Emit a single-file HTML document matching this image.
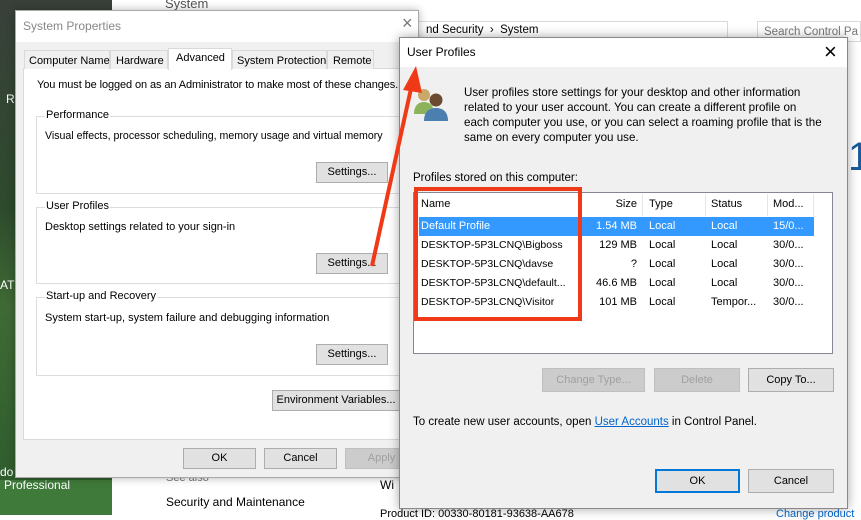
<!DOCTYPE html>
<html><head><meta charset="utf-8"><style>
*{box-sizing:border-box;margin:0;padding:0}
body{width:861px;height:515px;overflow:hidden;position:relative;background:#fff;font-family:"Liberation Sans",sans-serif;font-size:11px;color:#000}
.a{position:absolute;white-space:nowrap}
.btn{position:absolute;background:#e1e1e1;border:1px solid #adadad;text-align:center;line-height:19px;font-size:11px;white-space:nowrap}
.dis{color:#a0a0a0;background:#cccccc;border-color:#bfbfbf}
.grp{position:absolute;border:1px solid #dcdcdc}
.grp .l{position:absolute;top:-8px;left:8px;background:#fff;padding:0 1px;white-space:nowrap}
.row{position:absolute;left:419px;width:395px;height:19px;line-height:19px;font-size:11px}
.row span{position:absolute;white-space:nowrap}
</style></head><body>
<div class="a" style="left:0;top:0;width:112px;height:515px;background:linear-gradient(#39403a,#2d4a2c 40%,#3f6a35 60%,#2c5a2c 100%)"></div>
<div class="a" style="left:0;top:480px;width:112px;height:35px;background:#3f7a3a"></div>
<div class="a" style="left:4px;top:478px;color:#fff;font-size:12px">Professional</div>
<div class="a" style="left:0;top:465px;color:#fff;font-size:12px">do</div>
<div class="a" style="left:0;top:278px;color:#fff;font-size:12px">AT</div>
<div class="a" style="left:6px;top:92px;color:#fff;font-size:12px">R</div>
<div class="a" style="left:136px;top:0;width:725px;height:515px;background:#fff"></div>
<div class="a" style="left:165px;top:-4px;font-size:13px;color:#555">System</div>
<div class="a" style="left:418px;top:21px;width:310px;height:21px;border:1px solid #d9d9d9"></div>
<div class="a" style="left:426px;top:24px;font-size:11.5px">nd Security &nbsp;›&nbsp; System</div>
<div class="a" style="left:757px;top:21px;width:104px;height:21px;border:1px solid #d9d9d9;color:#777;padding:4px 6px;font-size:11.5px;overflow:hidden">Search Control Pa</div>
<div class="a" style="left:848px;top:135px;font-size:40px;color:#1a5a9a">1</div>
<div class="a" style="left:166px;top:472px;color:#777">See also</div>
<div class="a" style="left:166px;top:495px;font-size:12px">Security and Maintenance</div>
<div class="a" style="left:380px;top:478px;font-size:12px">Wi</div>
<div class="a" style="left:380px;top:508px;font-size:11px">Product ID: 00330-80181-93638-AA678</div>
<div class="a" style="left:776px;top:508px;font-size:11px;color:#06c">Change product</div>
<div class="a" style="left:15px;top:10px;width:404px;height:468px;background:#f0f0f0;border:1px solid #aaa;box-shadow:0 0 8px rgba(0,0,0,.3)"></div>
<div class="a" style="left:16px;top:11px;width:402px;height:31px;background:#fff"></div>
<div class="a" style="left:23px;top:19px;font-size:12px;color:#888">System Properties</div>
<div class="a" style="left:402px;top:13px;font-size:18px;color:#777">×</div>
<div class="a" style="left:23px;top:68px;width:390px;height:372px;background:#fff;border:1px solid #d9d9d9"></div>
<div class="a" style="left:24px;top:50px;width:86px;height:19px;border:1px solid #d9d9d9;border-bottom:none;padding:4px 4px;background:#f0f0f0">Computer Name</div>
<div class="a" style="left:110px;top:50px;width:58px;height:19px;border:1px solid #d9d9d9;border-bottom:none;padding:4px 5px;background:#f0f0f0">Hardware</div>
<div class="a" style="left:168px;top:48px;width:64px;height:22px;border:1px solid #d9d9d9;border-bottom:none;padding:3px 7px;background:#fff">Advanced</div>
<div class="a" style="left:232px;top:50px;width:95px;height:19px;border:1px solid #d9d9d9;border-bottom:none;padding:4px 4px;background:#f0f0f0">System Protection</div>
<div class="a" style="left:327px;top:50px;width:47px;height:19px;border:1px solid #d9d9d9;border-bottom:none;padding:4px 5px;background:#f0f0f0">Remote</div>
<div class="a" style="left:37px;top:79px;font-size:11px;letter-spacing:-.1px">You must be logged on as an Administrator to make most of these changes.</div>
<div class="grp" style="left:36px;top:116px;width:380px;height:78px"><span class="l">Performance</span></div>
<div class="a" style="left:45px;top:130px;font-size:10.6px">Visual effects, processor scheduling, memory usage and virtual memory</div>
<div class="btn" style="left:316px;top:162px;width:72px;height:21px">Settings...</div>
<div class="grp" style="left:36px;top:207px;width:380px;height:77px"><span class="l">User Profiles</span></div>
<div class="a" style="left:45px;top:221px">Desktop settings related to your sign-in</div>
<div class="btn" style="left:316px;top:253px;width:72px;height:21px">Settings...</div>
<div class="grp" style="left:36px;top:297px;width:380px;height:79px"><span class="l">Start-up and Recovery</span></div>
<div class="a" style="left:45px;top:312px">System start-up, system failure and debugging information</div>
<div class="btn" style="left:316px;top:344px;width:72px;height:21px">Settings...</div>
<div class="btn" style="left:272px;top:390px;width:128px;height:21px">Environment Variables...</div>
<div class="btn" style="left:183px;top:448px;width:73px;height:21px">OK</div>
<div class="btn" style="left:264px;top:448px;width:73px;height:21px">Cancel</div>
<div class="btn dis" style="left:345px;top:448px;width:73px;height:21px">Apply</div>
<div class="a" style="left:399px;top:37px;width:449px;height:472px;background:#f0f0f0;border:1px solid #888;box-shadow:0 0 10px rgba(0,0,0,.35)"></div>
<div class="a" style="left:400px;top:38px;width:447px;height:29px;background:#fff"></div>
<div class="a" style="left:407px;top:45px;font-size:12px">User Profiles</div>
<div class="a" style="left:824px;top:39px;font-size:22px;font-weight:300">×</div>
<svg class="a" style="left:412px;top:86px" width="40" height="36" viewBox="0 0 40 36">
<circle cx="12" cy="9" r="6" fill="#c9a86a"/><path d="M2 28c0-9 5-12 10-12s10 3 10 12z" fill="#8cb35a"/>
<circle cx="24" cy="14" r="6.5" fill="#6b4a30"/><path d="M12 35c0-10 6-13 12-13s12 3 12 13z" fill="#4a7fb0"/></svg>
<div class="a" style="left:464px;top:85px;line-height:15px;font-size:11.6px">User profiles store settings for your desktop and other information<br>related to your user account. You can create a different profile on<br>each computer you use, or you can select a roaming profile that is the<br>same on every computer you use.</div>
<div class="a" style="left:413px;top:172px;font-size:11.5px">Profiles stored on this computer:</div>
<div class="a" style="left:413px;top:192px;width:420px;height:162px;background:#fff;border:1px solid #828790"></div>
<div class="a" style="left:642px;top:194px;width:1px;height:22px;background:#e5e5e5"></div>
<div class="a" style="left:705px;top:194px;width:1px;height:22px;background:#e5e5e5"></div>
<div class="a" style="left:767px;top:194px;width:1px;height:22px;background:#e5e5e5"></div>
<div class="a" style="left:813px;top:194px;width:1px;height:22px;background:#e5e5e5"></div>
<div class="row" style="top:195px"><span style="left:2px">Name</span><span style="right:177px">Size</span><span style="left:230px">Type</span><span style="left:292px">Status</span><span style="left:354px">Mod...</span></div>
<div class="row" style="top:217px;background:#3399ff;color:#fff"><span style="left:2px">Default Profile</span><span style="right:177px">1.54 MB</span><span style="left:230px">Local</span><span style="left:292px">Local</span><span style="left:354px">15/0...</span></div>
<div class="row" style="top:236px"><span style="left:2px;font-size:10.5px">DESKTOP-5P3LCNQ\Bigboss</span><span style="right:177px">129 MB</span><span style="left:230px">Local</span><span style="left:292px">Local</span><span style="left:354px">30/0...</span></div>
<div class="row" style="top:255px"><span style="left:2px;font-size:10.5px">DESKTOP-5P3LCNQ\davse</span><span style="right:177px">?</span><span style="left:230px">Local</span><span style="left:292px">Local</span><span style="left:354px">30/0...</span></div>
<div class="row" style="top:274px"><span style="left:2px;font-size:10.5px">DESKTOP-5P3LCNQ\default...</span><span style="right:177px">46.6 MB</span><span style="left:230px">Local</span><span style="left:292px">Local</span><span style="left:354px">30/0...</span></div>
<div class="row" style="top:293px"><span style="left:2px;font-size:10.5px">DESKTOP-5P3LCNQ\Visitor</span><span style="right:177px">101 MB</span><span style="left:230px">Local</span><span style="left:292px">Tempor...</span><span style="left:354px">30/0...</span></div>
<div class="a" style="left:414px;top:187px;width:168px;height:134px;border:4px solid #f03a17"></div>
<div class="btn dis" style="left:542px;top:368px;width:103px;height:24px;line-height:22px">Change Type...</div>
<div class="btn dis" style="left:654px;top:368px;width:86px;height:24px;line-height:22px">Delete</div>
<div class="btn" style="left:748px;top:368px;width:86px;height:24px;line-height:22px">Copy To...</div>
<div class="a" style="left:413px;top:416px;font-size:11.5px">To create new user accounts, open <span style="color:#06c;text-decoration:underline">User Accounts</span> in Control Panel.</div>
<div class="btn" style="left:655px;top:469px;width:85px;height:24px;line-height:20px;border:2px solid #0078d7">OK</div>
<div class="btn" style="left:748px;top:469px;width:86px;height:24px;line-height:22px">Cancel</div>
<svg class="a" style="left:0;top:0" width="861" height="515"><line x1="372" y1="266" x2="412" y2="84" stroke="#f03a17" stroke-width="4"/><polygon points="416,66 403,90 422,93" fill="#f03a17"/></svg>
</body></html>
